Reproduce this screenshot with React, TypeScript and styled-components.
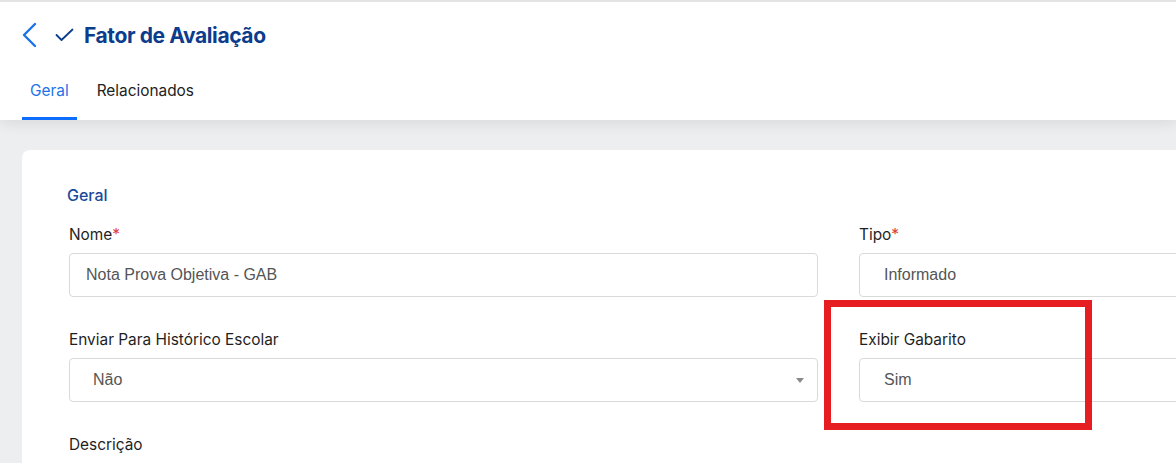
import React from "react";
import styled, { createGlobalStyle } from "styled-components";

const GlobalStyle = createGlobalStyle`
  html, body {
    margin: 0;
    padding: 0;
    background: #eceef0;
    overflow: hidden;
  }
  body {
    font-family: Inter, "Noto Sans", sans-serif;
    color: #222;
  }
`;

const Page = styled.div`
  position: relative;
  width: 1176px;
  height: 463px;
  overflow: hidden;
`;

const Header = styled.header`
  background: #fff;
  border-top: 2px solid #e3e3e3;
  box-shadow: 0 3px 14px rgba(0, 0, 0, 0.09);
  position: relative;
  z-index: 1;
`;

const TitleRow = styled.div`
  display: flex;
  align-items: center;
  height: 66px;
  padding-left: 20px;
`;

const IconButton = styled.span<{ $gap: number }>`
  display: flex;
  align-items: center;
  margin-right: ${(p) => p.$gap}px;
`;

const Title = styled.h1`
  margin: 0;
  font-size: 21px;
  font-weight: 700;
  letter-spacing: -0.4px;
  color: #0c3c8c;
`;

const Tabs = styled.nav`
  display: flex;
  gap: 12px;
  padding-left: 22px;
  height: 52px;
`;

const Tab = styled.div<{ $active?: boolean }>`
  display: flex;
  align-items: flex-start;
  padding: 13px 8px 0;
  font-size: 15.4px;
  line-height: 20px;
  color: ${(p) => (p.$active ? "#1a73e8" : "#222")};
  border-bottom: 3px solid ${(p) => (p.$active ? "#0d6efd" : "transparent")};
`;

const Main = styled.main`
  padding: 30px 0 0 22px;
`;

const Card = styled.section`
  width: 1700px;
  background: #fff;
  border-radius: 8px;
  padding: 34px 47px 40px 45px;
  box-sizing: border-box;
`;

const SectionTitle = styled.h2`
  margin: 0 0 19px;
  font-size: 16px;
  line-height: 22px;
  font-weight: 500;
  color: #1a4b9b;
`;

const Grid = styled.div`
  display: grid;
  grid-template-columns: 749px 749px;
  column-gap: 41px;
  row-gap: 33px;
  padding-left: 2px;
`;

const Field = styled.div<{ $span?: boolean }>`
  display: flex;
  flex-direction: column;
  grid-column: ${(p) => (p.$span ? "1 / -1" : "auto")};
`;

const Label = styled.label`
  font-size: 15.4px;
  line-height: 20px;
  margin-bottom: 8px;
  color: #1f1f1f;
`;

const Req = styled.span`
  color: #e53935;
`;

const Box = styled.div<{ $pad: number }>`
  position: relative;
  display: flex;
  align-items: center;
  height: 44px;
  box-sizing: border-box;
  border: 1px solid #d9d9d9;
  border-radius: 4px;
  padding-left: ${(p) => p.$pad}px;
  font-family: "Liberation Sans", Arial, sans-serif;
  font-size: 16px;
  color: #555;
`;

const Caret = styled.span`
  position: absolute;
  right: 13px;
  top: 50%;
  margin-top: -2px;
  width: 0;
  height: 0;
  border-left: 4px solid transparent;
  border-right: 4px solid transparent;
  border-top: 5px solid #8a8a8a;
`;

const Highlight = styled.div`
  position: absolute;
  left: 824px;
  top: 300px;
  width: 268px;
  height: 130px;
  box-sizing: border-box;
  border: 7px solid #e61e22;
  z-index: 2;
`;

export default function App() {
  return (
    <>
      <GlobalStyle />
      <Page>
        <Header>
          <TitleRow>
            <IconButton $gap={17}>
              <svg width="18" height="26" viewBox="0 0 18 26" fill="none">
                <path d="M15 2 L4 13 L15 24" stroke="#1a73e8" strokeWidth="2.4" strokeLinecap="round" strokeLinejoin="round" />
              </svg>
            </IconButton>
            <IconButton $gap={10}>
              <svg width="19" height="14" viewBox="0 0 19 14" fill="none">
                <path d="M1.5 7 L6.5 12 L17.5 1.5" stroke="#0c3c8c" strokeWidth="1.8" strokeLinecap="round" strokeLinejoin="round" />
              </svg>
            </IconButton>
            <Title>Fator de Avaliação</Title>
          </TitleRow>
          <Tabs>
            <Tab $active>Geral</Tab>
            <Tab>Relacionados</Tab>
          </Tabs>
        </Header>
        <Main>
          <Card>
            <SectionTitle>Geral</SectionTitle>
            <Grid>
              <Field>
                <Label>
                  Nome<Req>*</Req>
                </Label>
                <Box $pad={16}>Nota Prova Objetiva - GAB</Box>
              </Field>
              <Field>
                <Label>
                  Tipo<Req>*</Req>
                </Label>
                <Box $pad={24}>Informado</Box>
              </Field>
              <Field>
                <Label>Enviar Para Histórico Escolar</Label>
                <Box $pad={23}>
                  Não
                  <Caret />
                </Box>
              </Field>
              <Field>
                <Label>Exibir Gabarito</Label>
                <Box $pad={24}>Sim</Box>
              </Field>
              <Field $span>
                <Label>Descrição</Label>
                <Box $pad={16} />
              </Field>
            </Grid>
          </Card>
        </Main>
        <Highlight />
      </Page>
    </>
  );
}
